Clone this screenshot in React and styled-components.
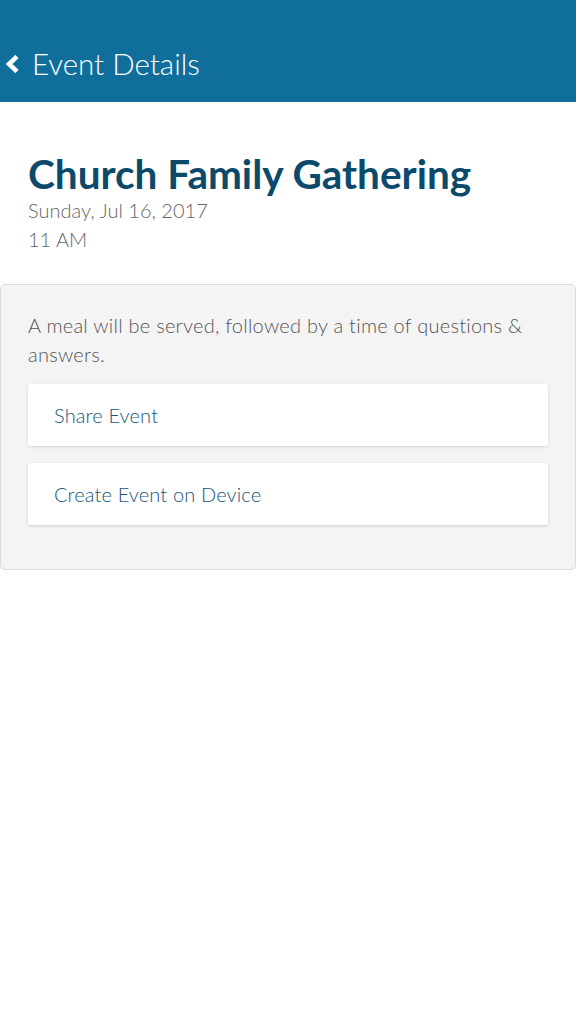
import React from "react";
import styled, { createGlobalStyle } from "styled-components";

const Global = createGlobalStyle`
  html, body { margin: 0; padding: 0; background: #fff; }
  body { font-family: Lato, "Open Sans", sans-serif; -webkit-font-smoothing: antialiased; }
  * { box-sizing: border-box; }
`;

const Header = styled.header`
  height: 102px;
  background: #0f6f9a;
  display: flex;
  align-items: center;
  gap: 12px;
  padding: 26px 0 0 4px;
  color: #fff;
`;

const BackButton = styled.button`
  border: 0;
  background: none;
  padding: 0;
  width: 16px;
  height: 22px;
  display: flex;
  align-items: center;
  cursor: pointer;
`;

const HeaderTitle = styled.h1`
  margin: 0;
  font-weight: 300;
  font-size: 29.5px;
  line-height: 1;
`;

const Intro = styled.section`
  padding: 50px 28px 30px;
`;

const EventTitle = styled.h2`
  margin: 0;
  font-size: 40.5px;
  line-height: 44px;
  font-weight: 700;
  color: #0c4a6b;
`;

const Meta = styled.div`
  font-size: 20px;
  line-height: 29px;
  font-weight: 300;
  color: #666;
`;

const Card = styled.section`
  background: #f4f4f4;
  border: 1px solid #dcdcdc;
  border-radius: 5px;
  padding: 26px 27px 44px;
  display: flex;
  flex-direction: column;
  gap: 15px;
`;

const Description = styled.p`
  margin: 0;
  font-size: 20px;
  line-height: 29px;
  font-weight: 300;
  letter-spacing: 0.25px;
  color: #555;
`;

const Actions = styled.div`
  display: flex;
  flex-direction: column;
  gap: 17px;
`;

const ActionButton = styled.button`
  height: 62px;
  background: #fff;
  border: 0;
  border-radius: 2px;
  box-shadow: 0 1px 3px rgba(0, 0, 0, 0.15);
  padding: 0 26px;
  text-align: left;
  font-family: inherit;
  font-size: 20px;
  font-weight: 300;
  letter-spacing: 0.15px;
  color: #155779;
  cursor: pointer;
`;

export default function App() {
  return (
    <>
      <Global />
      <Header>
        <BackButton aria-label="Back">
          <svg width="16" height="22" viewBox="0 0 16 22">
            <path d="M13 3.5 L5 11 L13 18.5" fill="none" stroke="#fff" strokeWidth="4.5" strokeLinecap="butt" strokeLinejoin="miter" />
          </svg>
        </BackButton>
        <HeaderTitle>Event Details</HeaderTitle>
      </Header>
      <Intro>
        <EventTitle>Church Family Gathering</EventTitle>
        <Meta>Sunday, Jul 16, 2017</Meta>
        <Meta>11 AM</Meta>
      </Intro>
      <Card>
        <Description>A meal will be served, followed by a time of questions &amp; answers.</Description>
        <Actions>
          <ActionButton>Share Event</ActionButton>
          <ActionButton>Create Event on Device</ActionButton>
        </Actions>
      </Card>
    </>
  );
}
